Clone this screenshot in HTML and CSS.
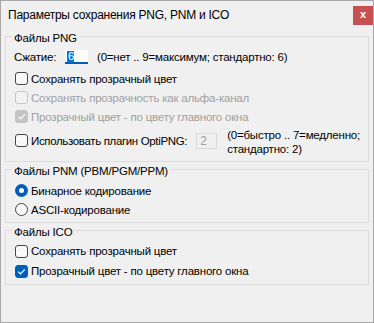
FILE: index.html
```html
<!DOCTYPE html>
<html lang="ru">
<head>
  <meta charset="UTF-8" />
  <title>Параметры сохранения PNG, PNM и ICO</title>
  <link rel="stylesheet" href="styles.css">
</head>
<body>
  <div class="window">
    <div class="titlebar">
      <span class="title">Параметры сохранения PNG, PNM и ICO</span>
      <span class="close">x</span>
    </div>

    <div class="group group-png">
      <div class="group-title">Файлы PNG</div>
      <div class="row row-compress">
        <span class="label">Сжатие:</span>
        <span class="edit edit-focus"><span class="sel">6</span></span>
        <span class="hint">(0=нет .. 9=максимум; стандартно: 6)</span>
      </div>
      <div class="check first"><span class="box"></span>Сохранять прозрачный цвет</div>
      <div class="check disabled"><span class="box"></span>Сохранять прозрачность как альфа-канал</div>
      <div class="check disabled checked">
        <span class="box"><svg width="13" height="13" viewBox="0 0 13 13"><polyline points="3.2,6.6 5.5,8.9 9.8,4.4" /></svg></span>Прозрачный цвет - по цвету главного окна
      </div>
      <div class="row row-opti">
        <div class="check opti"><span class="box"></span>Использовать плагин OptiPNG:</div>
        <span class="edit edit-disabled">2</span>
        <span class="hint hint-opti">(0=быстро .. 7=медленно;<br>стандартно: 2)</span>
      </div>
    </div>

    <div class="group group-pnm">
      <div class="group-title">Файлы PNM (PBM/PGM/PPM)</div>
      <div class="radio first selected"><span class="dot"></span>Бинарное кодирование</div>
      <div class="radio"><span class="dot"></span>ASCII-кодирование</div>
    </div>

    <div class="group group-ico">
      <div class="group-title">Файлы ICO</div>
      <div class="check tall first"><span class="box"></span>Сохранять прозрачный цвет</div>
      <div class="check tall checked">
        <span class="box"><svg width="13" height="13" viewBox="0 0 13 13"><polyline points="3.2,6.6 5.5,8.9 9.8,4.4" /></svg></span>Прозрачный цвет - по цвету главного окна
      </div>
    </div>
  </div>
</body>
</html>
```

FILE: styles.css
```css
:root {
  --bg: #f0f0f0;
  --text: #000000;
  --muted: #a0a0a0;
  --frame: #dcdcdc;
  --accent: #005fb8;
}
* {
  margin: 0;
  padding: 0;
  box-sizing: border-box;
}
body {
  background: var(--bg);
  font-family: "Liberation Sans", Arial, sans-serif;
  font-size: 11.5px;
  letter-spacing: -0.2px;
  color: var(--text);
}
.window {
  width: 374px;
  height: 323px;
  border: 1px solid #a8a8a8;
  background: var(--bg);
  white-space: nowrap;
}
.titlebar {
  display: flex;
  align-items: flex-start;
  height: 26px;
}
.title {
  margin: 7px 0 0 7px;
  line-height: 15px;
  font-size: 12px;
  letter-spacing: -0.25px;
}
.close {
  margin: 5px 0 0 auto;
  width: 20px;
  height: 19px;
  background: #c75050;
  color: #ffffff;
  font-weight: bold;
  font-size: 11px;
  line-height: 17px;
  text-align: center;
}
.group {
  margin: 0 4px 7px;
  border: 1px solid var(--frame);
  padding: 0 8px 3px 8px;
}
.group-png {
  margin-top: 9px;
  padding-bottom: 5px;
}
.group-title {
  display: table;
  margin: -6px 0 0 -2px;
  padding: 0 2px;
  background: var(--bg);
  line-height: 15px;
}
.row {
  display: flex;
}
.row-compress {
  margin-top: 3px;
  height: 15px;
  align-items: center;
}
.row-compress .label {
  width: 51px;
}
.edit {
  display: block;
  background: #ffffff;
}
.edit-focus {
  width: 23px;
  height: 14px;
  margin-top: 1px;
  border-bottom: 2px solid var(--accent);
  padding: 1px 0 0 2px;
}
.sel {
  display: block;
  width: 7px;
  height: 11px;
  background: #0078d7;
  color: #ffffff;
  line-height: 11px;
  padding-left: 1px;
}
.hint {
  margin-left: 9px;
}
.check, .radio {
  display: flex;
  align-items: center;
  height: 19px;
  padding-left: 1px;
}
.check.first {
  margin-top: 5px;
}
.check.tall {
  height: 20px;
}
.group-ico .check.first {
  margin-top: 1px;
}
.box {
  display: block;
  flex: none;
  width: 13px;
  height: 13px;
  margin-right: 3px;
  border: 1px solid #454545;
  border-radius: 3px;
  background: #f9f9f9;
}
.box svg {
  display: block;
  margin: -1px;
}
.box polyline {
  fill: none;
  stroke: #ffffff;
  stroke-width: 1.3;
}
.checked .box {
  background: var(--accent);
  border-color: var(--accent);
}
.disabled {
  color: var(--muted);
}
.disabled .box {
  border-color: #c6c6c6;
  background: #f3f3f3;
}
.disabled.checked .box {
  background: #c4c4c4;
  border-color: #c4c4c4;
}
.row-opti {
  margin-top: 2px;
  height: 28px;
  align-items: flex-start;
}
.check.opti {
  width: 184px;
  margin-top: 3px;
  letter-spacing: -0.35px;
}
.edit-disabled {
  width: 21px;
  height: 16px;
  margin-top: 5px;
  background: var(--bg);
  border: 1px solid #dadada;
  color: var(--muted);
  padding-left: 3px;
  line-height: 14px;
  font-size: 12px;
}
.hint-opti {
  margin-left: 10px;
  line-height: 14px;
}
.radio.first {
  margin-top: 2px;
}
.dot {
  display: block;
  flex: none;
  width: 13px;
  height: 13px;
  margin-right: 3px;
  border: 1px solid #454545;
  border-radius: 50%;
  background: #f9f9f9;
}
.selected .dot {
  border: 4px solid var(--accent);
  background: #ffffff;
}
```
